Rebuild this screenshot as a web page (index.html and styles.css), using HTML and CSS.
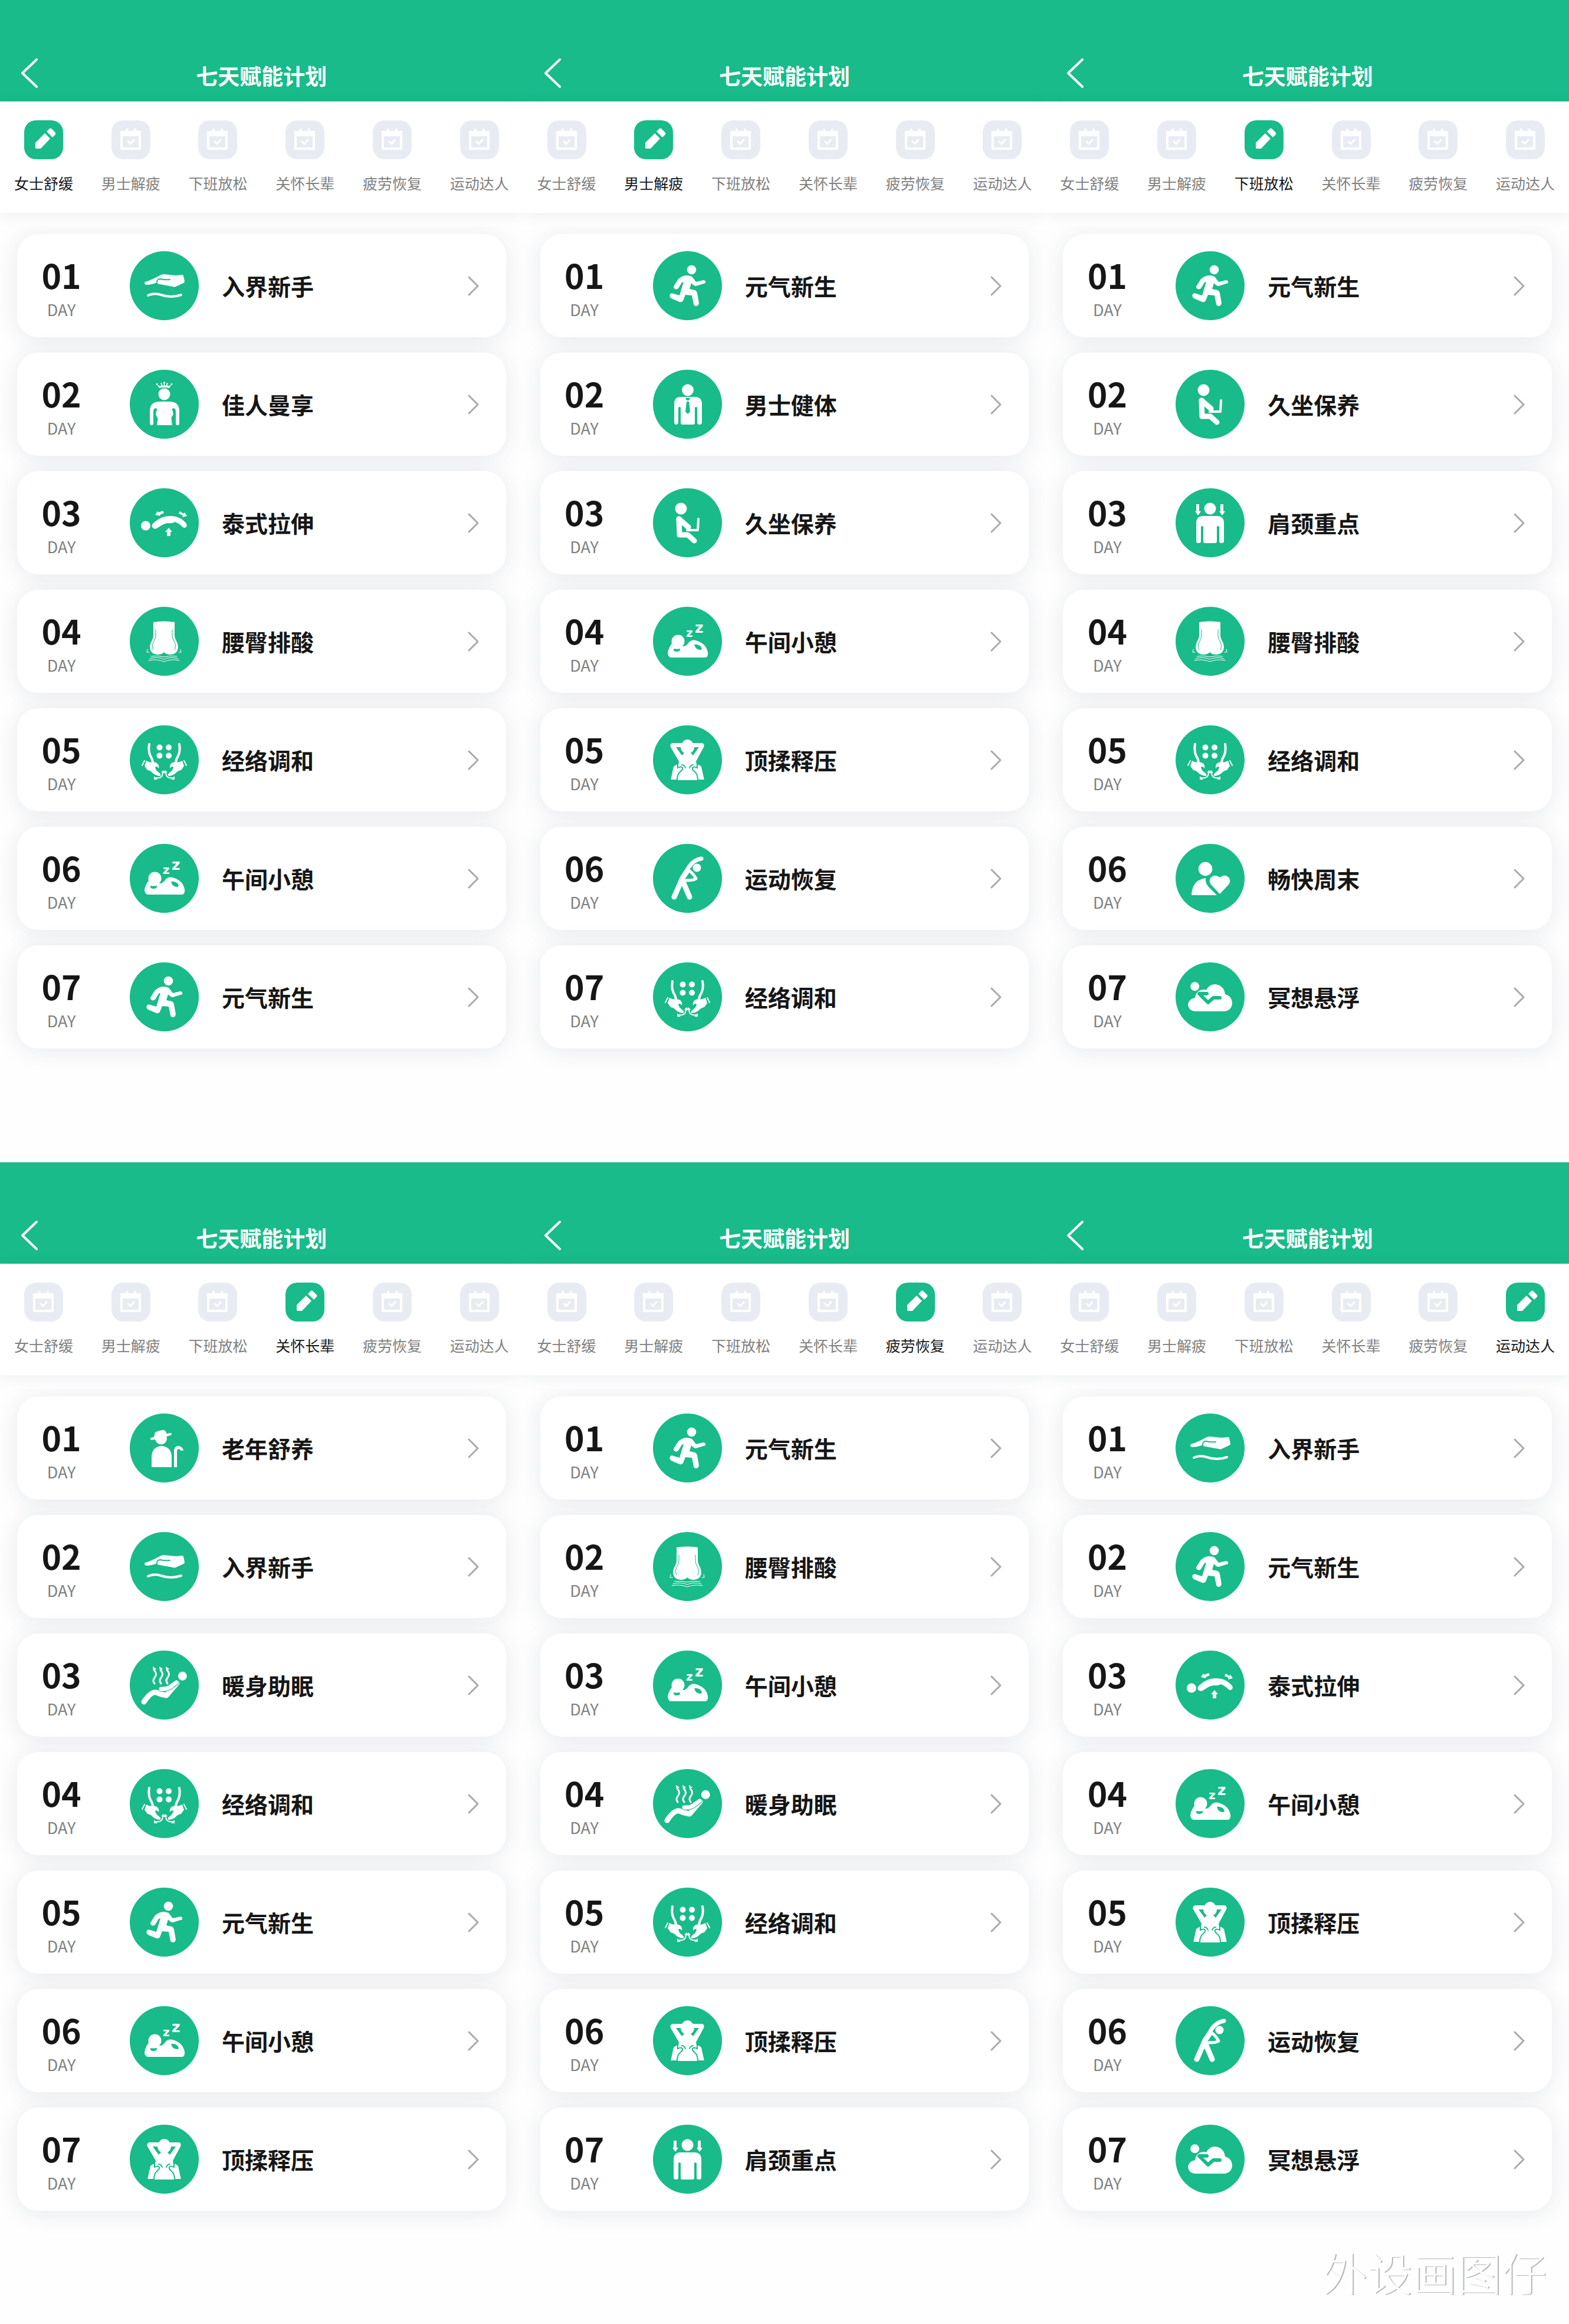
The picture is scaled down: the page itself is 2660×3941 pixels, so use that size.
FILE: index.html
```html
<!DOCTYPE html>
<html lang="zh-CN">
<head>
    <meta charset="UTF-8">
    <meta name="viewport" content="width=device-width, initial-scale=1.0">
    <title>七天赋能计划</title>
    <link rel="stylesheet" href="styles.css">
</head>
<body>

    <!-- Icon sprite -->
    <svg class="sprite" aria-hidden="true">
        <symbol id="pencil" viewBox="0 0 66 66">
            <path d="M19 38 L35 22 L44 31 L28 48 H20 Q19 48 19 47 Z"/>
            <path d="M38 19 L43 14 Q44 13 46 14 L53 21 Q54 22 53 24 L48 29 Z"/>
        </symbol>
        <symbol id="calendar" viewBox="0 0 66 66">
            <path d="M17 20 H48 V48 H17 Z" class="line w4"/>
            <path d="M15 19 Q15 18 16 18 H49 Q50 18 50 19 V27 H15 Z"/>
            <path d="M26 16 V20 M40 16 V20" class="line w4"/>
            <path d="M28 36 L32 40 L38 33" class="line w3"/>
        </symbol>
        <symbol id="back" viewBox="0 0 32 52">
            <path d="M28 3 L4 26 L28 49" class="line w4"/>
        </symbol>
        <symbol id="next" viewBox="0 0 20 34">
            <path d="M2 2 L17 17 L2 32" class="line w3"/>
        </symbol>

        <symbol id="hand" viewBox="0 0 117 117">
            <path d="M26 52 Q39 48 51 41 Q54 39 58 39 L78 41 L89 40 Q91 40 91 42 L93 51 Q93 53 91 54 L78 60 Q76 61 73 60 L51 56 Q47 56 46 53 Q38 57 28 57 Q23 56 26 52 Z"/>
            <path d="M46 55 Q45 47 52 47 Q58 49 68 48" class="cut w2"/>
            <path d="M31 75 Q42 70 53 74 Q70 80 87 74" class="line w4"/>
        </symbol>
        <symbol id="queen" viewBox="0 0 117 117">
            <path d="M50 31 L46 25 L52 28 L54 24 L57 28 L58.5 22 L60 28 L63 24 L65 28 L71 25 L67 31 Q58 29 50 31 Z"/>
            <circle cx="46" cy="24.5" r="1.4"/><circle cx="53.5" cy="23.5" r="1.2"/><circle cx="58.5" cy="22" r="1.8"/><circle cx="63.5" cy="23.5" r="1.2"/><circle cx="71" cy="24.5" r="1.4"/>
            <circle cx="58.5" cy="41.5" r="10"/>
            <path d="M34 70 Q34 54 51 54 H67 Q84 54 84 70 V91 Q84 94 81 94 Q78 94 78 91 V71 Q78 65 73 65 Q71 68 73 71 Q75 76 71 80 Q70 82 71 87 L72 94 H46 L47 87 Q48 82 46 80 Q43 76 45 71 Q47 68 45 65 Q40 65 40 71 V91 Q40 94 37 94 Q34 94 34 91 Z"/>
        </symbol>
        <symbol id="stretch" viewBox="0 0 117 117">
            <circle cx="27" cy="63.5" r="8"/>
            <path d="M39 60 Q52 47 68 47 Q86 47 96 60 Q98 64 95 66 Q93 68 90 66 Q83 59 76 57 Q73 60 65 59 Q57 60 49 66 Q43 71 39 67 Q36 64 39 60 Z"/>
            <path d="M43 45 L47 39 L49 41 L56 38 L58 42 L51 45 L52 47 Z"/>
            <path d="M97 47 L93 41 L91 43 L85 39 L83 43 L90 46 L89 49 Z"/>
            <path d="M66 67 L72 74 H69 V81 H63 V74 H60 Z"/>
        </symbol>
        <symbol id="hip" viewBox="0 0 117 117">
            <path d="M40 26 Q58 23 76 26 V48 Q76 53 80 60 Q82 64 82 70 Q80 81 69 81 Q62 81 58 77 Q54 81 47 81 Q36 81 34 70 Q34 64 36 60 Q40 53 40 48 Z"/>
            <path d="M44 39 V49 Q44 54 40 60 Q37 67 40 73 M72 39 V49 Q72 54 76 60 Q79 67 76 73" class="cut w1"/>
            <path d="M36 84 Q47 82 58 85 Q69 82 80 84 M34 88 Q46 84 58 89 Q70 84 82 88 M32 91 Q46 88 58 93 Q70 88 84 91" class="line w1"/>
            <path d="M30 72 L29 77 H33 M86 72 L87 77 H83" class="line w1"/>
        </symbol>
        <symbol id="meridian" viewBox="0 0 117 117">
            <circle cx="50.5" cy="37.5" r="5"/><circle cx="66" cy="37.5" r="5"/>
            <circle cx="50.5" cy="51.5" r="5"/><circle cx="66" cy="51.5" r="5"/>
            <g id="meridian-half">
                <path d="M33 32 Q31 44 35 52 Q39 58 39 64" class="line w4"/>
                <path d="M25 60 L21 68" class="line w2"/>
                <path d="M28 60 Q33 63 38 63 Q44 61 48 66 Q50 69 49 73 Q46 68 43 71 Q44 76 48 79 Q55 84 51 86 Q42 85 37 79 Q33 76 30 76 L25 69 Z"/>
                <path d="M44 89 Q56 91 56 79" class="line w2"/>
                <path d="M41 86 V92 H47 Z M53 80 L57 76 L60 81 Z"/>
            </g>
            <use href="#meridian-half" transform="translate(117 0) scale(-1 1)"/>
        </symbol>
        <symbol id="nap" viewBox="0 0 117 117">
            <path d="M32 62 Q25 72 25 79 Q26 86 31 86 H88 Q94 86 93 77 Q90 62 73 57 Q66 55 61 60 Q56 67 52 67 Z"/>
            <circle cx="42.5" cy="58.5" r="11"/>
            <path d="M35 71 Q40 72 46 71 Q47 76 40 76 Q34 76 35 71 Z" class="hole"/>
            <path d="M70 64 Q74 63 80 66 Q85 72 81 73 Q75 73 72 69 Z" class="hole"/>
        </symbol>
        <symbol id="run" viewBox="0 0 117 117">
            <circle cx="65.5" cy="31.5" r="7.8"/>
            <path d="M49 43 Q57 39 66 43 L73 52 L86 49 Q90 50 89 54 L73 59 Q69 59 65 54 L62 64 L71 66 Q74 67 75 71 L78 88 Q77 93 73 93 Q70 93 69 90 L66 75 L55 74 L51 84 Q49 87 45 86 L31 80 Q27 77 29 73 Q31 70 35 72 L45 75 L52 52 L49 53 L43 63 Q39 66 36 63 Q34 61 36 58 L43 47 Z"/>
        </symbol>
        <symbol id="man" viewBox="0 0 117 117">
            <circle cx="59" cy="34.5" r="10"/>
            <path d="M36 58 Q36 46 47 46 H71 Q83 46 83 58 V89 Q83 93 79 93 Q75 93 75 89 V65 Q75 63 73 63 Q71 63 71 65 V90 Q71 93 68 93 H50 Q47 93 47 90 V65 Q47 63 45 63 Q43 63 43 65 V89 Q43 93 39 93 Q36 93 36 89 Z"/>
            <path d="M55 48 H63 L61 52 H57 Z M57 54 H61 L63 71 L59 75 L55 71 Z" class="hole"/>
        </symbol>
        <symbol id="sit" viewBox="0 0 117 117">
            <circle cx="47.5" cy="34.5" r="10"/>
            <path d="M44 52 L45 79 H59 L70 89" class="line w9"/>
            <path d="M44 52 L60 66" class="line w9"/>
            <path d="M58 71 H76 L77 52" class="line w4"/>
        </symbol>
        <symbol id="knead" viewBox="0 0 117 117">
            <ellipse cx="58.5" cy="34" rx="10" ry="10"/>
            <path d="M33 30 H84 Q88 32 86 37 L73 61 L75 74 V93 H42 V74 L44 61 L30 37 Q28 32 33 30 Z"/>
            <g id="knead-half">
                <path d="M39 37 H47 Q47 43 53 47 L49 51 Z" class="hole"/>
                <path d="M29 93 L34 70 Q36 67 42 65 V72 Q48 69 50 72 Q51 75 47 78 Q41 82 41 93 Z" class="ring"/>
                <path d="M49 67 Q53 67 55 72" class="cut w2"/>
            </g>
            <use href="#knead-half" transform="translate(117 0) scale(-1 1)"/>
        </symbol>
        <symbol id="bend" viewBox="0 0 117 117">
            <circle cx="74.5" cy="40.5" r="7"/>
            <path d="M82 25 Q69 27 61 39 Q52 54 36 90" class="line w7"/>
            <path d="M36 90 L50 58 L58 46" class="line w9"/>
            <path d="M50 62 L62 90" class="line w9"/>
            <path d="M61 45 Q69 51 73 59 Q69 62 56 62" class="line w5"/>
        </symbol>
        <symbol id="shoulder" viewBox="0 0 117 117">
            <circle cx="58.5" cy="34.5" r="10"/>
            <path d="M35 59 Q35 47 47 47 H70 Q82 47 82 59 V90 Q82 93 78 93 Q74 93 74 90 V66 Q74 64 72 64 Q70 64 70 66 V90 Q70 93 67 93 H50 Q47 93 47 90 V66 Q47 64 45 64 Q43 64 43 66 V90 Q43 93 39 93 Q35 93 35 90 Z"/>
            <path d="M35 27 H40 V39 H43 L38 46 L33 39 H35 Z M76 27 H81 V39 H84 L79 46 L74 39 H76 Z"/>
        </symbol>
        <symbol id="heart" viewBox="0 0 117 117">
            <circle cx="50.5" cy="42.5" r="11.8"/>
            <path d="M27 87 Q28 61 51 58 Q50 66 56 73 L70 87 Z"/>
            <path d="M75 85 L60 69 Q56 64 59 58 Q66 50 75 57 Q84 50 91 58 Q94 64 90 69 Z"/>
        </symbol>
        <symbol id="cloud" viewBox="0 0 117 117">
            <circle cx="32.7" cy="40.7" r="7.5"/>
            <path d="M33 83 Q22 82 21 72 Q22 62 33 60 Q35 46 49 46 L52 47 Q57 37 67 37 Q82 39 84 54 Q95 57 96 68 Q96 81 83 83 Z"/>
            <path d="M53 53 H40 L55 68 L64 60 H75" class="cut w6"/>
        </symbol>
        <symbol id="elder" viewBox="0 0 117 117">
            <circle cx="53" cy="42.5" r="10"/>
            <path d="M41 40 L43 32 Q51 28 58 28 Q61 29 63 35 L60 41 L43 45 Z"/>
            <path d="M37 43 L69 35" class="line w4"/>
            <path d="M37 91 V71 Q39 56 54 55 Q69 56 71 71 V91 Z"/>
            <path d="M75 91 V63 Q76 55 82 55 Q89 55 91 63 H87 Q85 60 82 60 Q80 61 80 64 V91 Z"/>
        </symbol>
        <symbol id="warm" viewBox="0 0 117 117">
            <circle cx="89.3" cy="43.3" r="7.5"/>
            <path d="M24 87 Q36 69 45 71 Q55 75 62 76 L80 55" class="line w9"/>
            <path d="M53 65 Q65 66 72 59 L79 54" class="line w9 outline"/>
            <path d="M53 65 Q65 66 72 59 L79 54" class="line w7"/>
            <g id="steam">
                <path d="M42 56 Q38 51 42 46 Q47 40 42 34" class="line w3"/>
                <path d="M39 27 L45 31 L40 35 Z"/>
            </g>
            <use href="#steam" x="11"/>
            <use href="#steam" x="22"/>
        </symbol>
    </svg>

    <main class="screens" id="screens"></main>
    <p class="signature">外设画图仔</p>

    <script>
        const tabs = ["女士舒缓", "男士解疲", "下班放松", "关怀长辈", "疲劳恢复", "运动达人"];

        const courses = {
            hand: "入界新手",
            queen: "佳人曼享",
            stretch: "泰式拉伸",
            hip: "腰臀排酸",
            meridian: "经络调和",
            nap: "午间小憩",
            run: "元气新生",
            man: "男士健体",
            sit: "久坐保养",
            knead: "顶揉释压",
            bend: "运动恢复",
            shoulder: "肩颈重点",
            heart: "畅快周末",
            cloud: "冥想悬浮",
            elder: "老年舒养",
            warm: "暖身助眠"
        };

        // seven days for each tab
        const plans = [
            ["hand", "queen", "stretch", "hip", "meridian", "nap", "run"],
            ["run", "man", "sit", "nap", "knead", "bend", "meridian"],
            ["run", "sit", "shoulder", "hip", "meridian", "heart", "cloud"],
            ["elder", "hand", "warm", "meridian", "run", "nap", "knead"],
            ["run", "hip", "nap", "warm", "meridian", "knead", "shoulder"],
            ["hand", "run", "stretch", "nap", "knead", "bend", "cloud"]
        ];

        const snore = `<text x="56" y="51" class="z-small">z</text><text x="71" y="44" class="z-large">z</text>`;

        function icon(name, cls) {
            return `<svg class="${cls}" aria-hidden="true"><use href="#${name}"/>${name === "nap" ? snore : ""}</svg>`;
        }

        function renderTab(label, active) {
            return `<button class="tab ${active ? "active" : ""}">
                <span class="tab-icon">${icon(active ? "pencil" : "calendar", "fill")}</span>
                <span>${label}</span>
            </button>`;
        }

        function renderDay(key, index) {
            return `<li><a class="card" href="#">
                <span class="day"><b>0${index + 1}</b><small>DAY</small></span>
                <span class="badge">${icon(key, "fill")}</span>
                <span class="name">${courses[key]}</span>
                ${icon("next", "next")}
            </a></li>`;
        }

        document.getElementById("screens").innerHTML = plans.map((plan, current) => `
            <section class="screen">
                <header class="header">
                    <button class="back" aria-label="返回">${icon("back", "fill")}</button>
                    <h1>七天赋能计划</h1>
                </header>
                <nav class="tabs">${tabs.map((label, i) => renderTab(label, i === current)).join("")}</nav>
                <ul class="days">${plan.map(renderDay).join("")}</ul>
            </section>`).join("");
    </script>

</body>
</html>
```
FILE: styles.css
```css
:root {
    --green: #18bb89;
    --ink: #161616;
    --muted: #808080;
}
* {
    box-sizing: border-box;
}
body {
    margin: 0;
    position: relative;
    min-height: 100vh;
    background: #fefefe;
    color: var(--ink);
    font-family: "Noto Sans CJK SC", sans-serif;
}
button {
    border: none;
    padding: 0;
    background: none;
    font: inherit;
    color: inherit;
    cursor: pointer;
}
h1, p, ul {
    margin: 0;
    padding: 0;
}
.sprite {
    position: absolute;
    width: 0;
    height: 0;
}
.fill {
    display: block;
    width: 100%;
    height: 100%;
    fill: currentColor;
}

/* Screens */
.screens {
    display: grid;
    grid-template-columns: repeat(3, 1fr);
    row-gap: 153px;
}
.screen {
    overflow: hidden;
}
.header {
    display: grid;
    grid-template-columns: 32px 1fr 32px;
    align-items: end;
    height: 172px;
    padding: 0 34px 22px;
    background: var(--green);
    color: #fff;
}
.header h1 {
    font-size: 37px;
    font-weight: 700;
    line-height: 44px;
    text-align: center;
}
.back {
    height: 52px;
}

/* Tabs */
.tabs {
    display: flex;
    height: 189px;
    padding-top: 32px;
    background: #fff;
    box-shadow: 0 4px 24px rgba(40, 60, 90, 0.08);
}
.tab {
    flex: 1;
    display: flex;
    flex-direction: column;
    align-items: center;
    gap: 22px;
    font-size: 25px;
    line-height: 36px;
    white-space: nowrap;
    color: var(--muted);
}
.tab-icon {
    width: 66px;
    height: 66px;
    border-radius: 20px;
    background: #e8ecf2;
    color: #fff;
}
.tab.active {
    color: var(--ink);
}
.tab.active .tab-icon {
    background: var(--green);
}

/* Day cards */
.days {
    display: flex;
    flex-direction: column;
    gap: 26px;
    margin-top: 23px;
    padding: 13px 29px 40px;
    overflow: hidden;
    list-style: none;
}
.card {
    display: flex;
    align-items: center;
    height: 175px;
    padding: 0 45px 0 42px;
    border-radius: 36px;
    background: #fff;
    box-shadow: 0 4px 40px rgba(30, 50, 90, 0.1);
    color: inherit;
    text-decoration: none;
}
.days li {
    position: relative;
}
.day {
    display: flex;
    flex-direction: column;
    align-items: center;
    gap: 4px;
    width: 66px;
    padding-top: 4px;
}
.day b {
    font-size: 57px;
    font-weight: 700;
    line-height: 72px;
}
.day small {
    font-size: 27px;
    font-weight: 400;
    line-height: 40px;
    color: var(--muted);
}
.badge {
    width: 117px;
    height: 117px;
    margin: 0 39px 0 83px;
    border-radius: 50%;
    background: var(--green);
    color: #fff;
}
.name {
    flex: 1;
    padding-bottom: 2px;
    font-size: 39px;
    font-weight: 700;
}
.next {
    width: 20px;
    height: 34px;
    color: #aaa;
}

/* Icon strokes */
.line, .cut {
    fill: none;
    stroke: currentColor;
    stroke-linecap: round;
    stroke-linejoin: round;
}
.cut, .outline {
    stroke: var(--green);
}
.hole {
    fill: var(--green);
}
.ring {
    stroke: var(--green);
    stroke-width: 2px;
}
.w1 { stroke-width: 1px; }
.w2 { stroke-width: 2px; }
.w3 { stroke-width: 3px; }
.w4 { stroke-width: 4px; }
.w5 { stroke-width: 5px; }
.w6 { stroke-width: 6px; }
.w7 { stroke-width: 7px; }
.w9 { stroke-width: 9px; }
.z-small, .z-large {
    font-family: "DejaVu Sans", sans-serif;
    font-weight: bold;
    font-size: 20px;
}
.z-large {
    font-size: 25px;
}

.signature {
    position: absolute;
    right: 38px;
    bottom: 34px;
    font-size: 76px;
    font-weight: 300;
    line-height: 110px;
    color: #fff;
    text-shadow: 2px 1px 0 #b4b6ba;
}
```
